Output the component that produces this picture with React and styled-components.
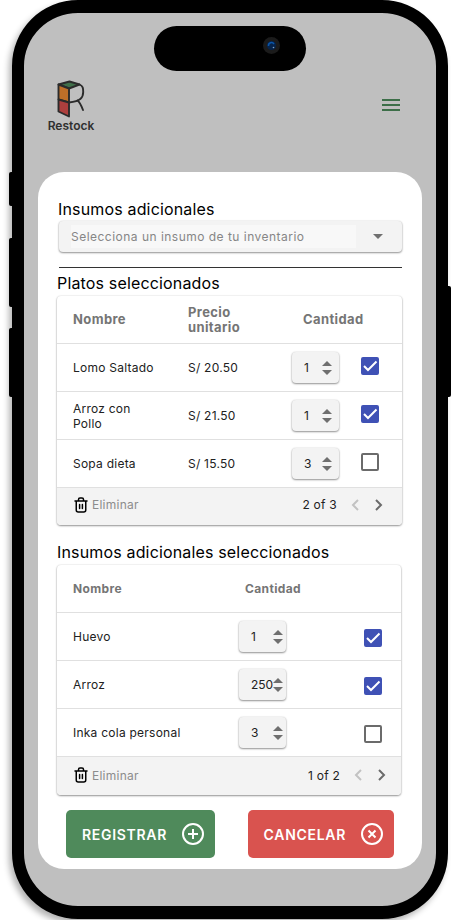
import React, { useState } from "react";
import styled, { createGlobalStyle } from "styled-components";

const GlobalStyle = createGlobalStyle`
  *, *::before, *::after { box-sizing: border-box; }
  body { margin: 0; background: #fff; }
  body, button, input, select { font-family: Inter, "Liberation Sans", sans-serif; }
  button { border: 0; padding: 0; background: none; color: inherit; cursor: pointer; }
`;

const Stage = styled.main`
  padding: 0 3px 1px 12px;
  overflow: hidden;
`;

const Phone = styled.div`
  position: relative;
  border: 12px solid #000;
  border-top-width: 13px;
  border-bottom-width: 13px;
  border-radius: 66px;
  background: #bfbfbf;
  box-shadow: -3px 4px 6px rgba(0, 0, 0, 0.3);
`;

const SideKey = styled.span`
  position: absolute;
  ${(p) => (p.$side === "right" ? "right: -15px;" : "left: -15px;")}
  top: ${(p) => p.$top}px;
  width: 6px;
  height: ${(p) => p.$height}px;
  background: #000;
  border-radius: 2px;
`;

const Island = styled.div`
  position: absolute;
  top: 13px;
  left: 50%;
  width: 152px;
  height: 45px;
  margin-left: -76px;
  padding-right: 26px;
  border-radius: 23px;
  background: #000;
  display: flex;
  align-items: center;
  justify-content: flex-end;
`;

const Camera = styled.svg`
  width: 17px;
  height: 17px;
  margin-bottom: 6px;
`;

const Screen = styled.div`
  padding: 0 14px 37px;
`;

const TopBar = styled.header`
  height: 159px;
  padding: 67px 22px 0 7px;
  display: flex;
  justify-content: space-between;
  align-items: flex-start;
`;

const Brand = styled.div`
  display: flex;
  flex-direction: column;
  align-items: center;
  width: 52px;
  color: #303030;
  font-size: 12px;
  font-weight: 600;
  line-height: 16px;
`;

const MenuButton = styled.button`
  display: grid;
  margin-top: 19px;
`;

const Sheet = styled.form`
  padding: 25px 20px 11px 19px;
  border-radius: 26px;
  background: #fff;
`;

const Title = styled.h2`
  margin: 0;
  color: #000;
  font-size: 16px;
  font-weight: 400;
  line-height: 24px;
  letter-spacing: 0.01em;
`;

const FieldLabel = styled(Title).attrs({ as: "label" })`
  display: block;
  padding-left: 1px;
`;

const raised = "0 1px 2px rgba(0, 0, 0, 0.4), 0 0 2px rgba(0, 0, 0, 0.14)";

const SelectBox = styled.div`
  display: grid;
  align-items: center;
  margin-left: 2px;
  height: 31px;
  border-radius: 4px;
  background: #f3f3f3;
  box-shadow: ${raised};

  > * { grid-area: 1 / 1; }
  > svg { justify-self: end; margin-right: 19px; pointer-events: none; }
`;

const Select = styled.select`
  appearance: none;
  width: 100%;
  height: 31px;
  padding: 4px 46px 4px 12px;
  border: 0;
  background: #f8f8f8 content-box;
  color: #868686;
  font-size: 12px;
  letter-spacing: 0.04em;
`;

const Divider = styled.hr`
  height: 1px;
  margin: 15px 0 3px 2px;
  border: 0;
  background: #333;
`;

const Panel = styled.section`
  margin: ${(p) => (p.$narrow ? "1px 1px 15px 0" : "1px 0 15px")};
  border-radius: 4px;
  overflow: hidden;
  background: #fff;
  box-shadow: ${raised};
`;

const Table = styled.table`
  width: 100%;
  table-layout: fixed;
  border-collapse: separate;
  border-spacing: 0;
  font-size: 12px;
  line-height: 15px;
  letter-spacing: 0.02em;
  color: #212121;
`;

const Th = styled.th`
  height: 48px;
  padding: 0 0 0 16px;
  border-bottom: 1px solid #e0e0e0;
  color: #757575;
  font-size: ${(p) => (p.$large ? 13 : 12)}px;
  font-weight: 700;
  letter-spacing: 0.03em;
  text-align: left;
`;

const Td = styled.td`
  height: 48px;
  padding: 0 0 0 ${(p) => p.$left ?? 16}px;
  border-bottom: 1px solid #e0e0e0;
`;

const CheckTd = styled(Td)`
  padding: ${(p) => (p.$low ? "3px 19px 0 0" : "0 0 3px 16px")};
  text-align: ${(p) => (p.$low ? "right" : "left")};
`;

const Name = styled.span`
  display: block;
  max-width: ${(p) => (p.$narrow ? "84px" : "none")};
`;

const StepperBox = styled.div`
  display: inline-flex;
  align-items: center;
  vertical-align: middle;
  width: 47px;
  height: 31px;
  padding-right: ${(p) => p.$inset}px;
  border-radius: 4px;
  background: #f3f3f3;
  box-shadow: ${raised};
`;

const NumberInput = styled.input`
  appearance: textfield;
  flex: 1;
  min-width: 0;
  height: 31px;
  padding: 0 0 0 12px;
  border: 0;
  background: none;
  color: #212121;
  font-size: 12px;
  &::-webkit-inner-spin-button { appearance: none; margin: 0; }
`;

const Arrows = styled.div`
  display: grid;
  gap: 4px;
  button { display: grid; }
`;

const CheckBox = styled.span`
  display: inline-grid;
  vertical-align: middle;
  > * { grid-area: 1 / 1; }
  > svg { pointer-events: none; }
`;

const CheckInput = styled.input`
  appearance: none;
  width: 18px;
  height: 18px;
  margin: 0;
  border: 2px solid #6b6b6b;
  border-radius: 2px;
  &:checked { border-color: #3f51b5; background: #3f51b5; }
`;

const Footer = styled.footer`
  display: flex;
  align-items: center;
  justify-content: space-between;
  height: ${(p) => (p.$compact ? 37 : 38)}px;
  padding: ${(p) => (p.$compact ? "0 17px 4px" : "0 13px 2px 17px")};
  background: #f3f3f3;
  font-size: 12px;
  letter-spacing: 0.02em;
`;

const DeleteButton = styled.button`
  display: flex;
  align-items: center;
  gap: 4px;
  color: #8c8c8c;
  letter-spacing: inherit;
  font-size: 12px;
  svg { color: #000; }
`;

const Pager = styled.nav`
  display: flex;
  align-items: center;
  gap: 12px;
  color: #212121;
`;

const PageButton = styled.button`
  display: grid;
  width: 12px;
  place-items: center;
  color: ${(p) => (p.disabled ? "#c2c2c2" : "#6b6b6b")};
`;

const Actions = styled.div`
  display: flex;
  justify-content: space-between;
  padding: 0 8px 0 9px;
`;

const ActionButton = styled.button`
  display: flex;
  align-items: center;
  gap: 14px;
  height: 48px;
  padding: 0 10px 0 16px;
  border-radius: 5px;
  background: ${(p) => (p.$danger ? "#d9534f" : "#4f8a5b")};
  color: #fff;
  font-size: 14px;
  font-weight: 600;
  letter-spacing: 0.05em;
`;

const Logo = () => (
  <svg width="28" height="38" viewBox="0 0 28 38" fill="none" stroke="#2b2b2b" strokeWidth="1.9" strokeLinejoin="round" strokeLinecap="round" aria-hidden="true">
    <path d="M1.5 4.5 L12.5 1.5 L22.5 4.5 L12 8.5 Z" fill="#3f6f49" />
    <path d="M1.5 4.5 L12 8.5 V22.5 L1.5 19.5 Z" fill="#bf6f28" />
    <path d="M1.5 19.5 L12 22.5 V36.5 L1.5 31.5 Z" fill="#ad3f3d" />
    <path d="M22.5 4.5 C26 6 26.2 8 26.2 12 C26.2 17.5 24 21 12 22.5" />
    <path d="M20.5 20.5 C23 22.5 24.5 26 26 30" />
  </svg>
);

const Triangle = ({ up }) => (
  <svg width="10" height="5" viewBox="0 0 10 5" fill="#6f6f6f" aria-hidden="true">
    <path d={up ? "M0 5 L5 0 L10 5 Z" : "M0 0 L5 5 L10 0 Z"} />
  </svg>
);

const TrashIcon = () => (
  <svg width="14" height="16" viewBox="0 0 14 16" fill="none" stroke="currentColor" strokeWidth="1.5" strokeLinecap="round" strokeLinejoin="round" aria-hidden="true">
    <path d="M1 4 H13 M4.5 4 V2.5 C4.5 1.5 5 1 6 1 H8 C9 1 9.5 1.5 9.5 2.5 V4 M2.25 4 V13 C2.25 14.2 3 15 4.2 15 H9.8 C11 15 11.75 14.2 11.75 13 V4 M5.6 7.5 V11.5 M8.4 7.5 V11.5" />
  </svg>
);

const Chevron = ({ left }) => (
  <svg width="8" height="12" viewBox="0 0 8 12" fill="none" stroke="currentColor" strokeWidth="2" aria-hidden="true">
    <path d={left ? "M7 1 L2 6 L7 11" : "M1 1 L6 6 L1 11"} />
  </svg>
);

const ActionIcon = ({ cross }) => (
  <svg width="24" height="24" viewBox="0 0 24 24" fill="none" stroke="#fff" strokeWidth="2" aria-hidden="true">
    <circle cx="12" cy="12" r="10" />
    <path d={cross ? "M8.5 8.5 L15.5 15.5 M15.5 8.5 L8.5 15.5" : "M12 7 V17 M7 12 H17"} />
  </svg>
);

function Stepper({ label, initial, inset }) {
  const [value, setValue] = useState(initial);
  return (
    <StepperBox $inset={inset}>
      <NumberInput type="number" aria-label={label} value={value} onChange={(e) => setValue(Number(e.target.value))} />
      <Arrows>
        <button type="button" aria-label="Aumentar" onClick={() => setValue(value + 1)}><Triangle up /></button>
        <button type="button" aria-label="Disminuir" onClick={() => setValue(Math.max(0, value - 1))}><Triangle /></button>
      </Arrows>
    </StepperBox>
  );
}

function Check({ label, initial }) {
  return (
    <CheckBox>
      <CheckInput type="checkbox" aria-label={label} defaultChecked={initial} />
      <svg width="18" height="18" viewBox="0 0 18 18" fill="none" stroke="#fff" strokeWidth="2" aria-hidden="true">
        <path d="M3 9 L7 13 L15.5 4.5" />
      </svg>
    </CheckBox>
  );
}

function PanelFooter({ pages, compact }) {
  return (
    <Footer $compact={compact}>
      <DeleteButton type="button"><TrashIcon />Eliminar</DeleteButton>
      <Pager aria-label="Páginas">
        <span>{pages}</span>
        <PageButton type="button" aria-label="Anterior" disabled><Chevron left /></PageButton>
        <PageButton type="button" aria-label="Siguiente"><Chevron /></PageButton>
      </Pager>
    </Footer>
  );
}

const dishes = [
  { name: "Lomo Saltado", price: "S/ 20.50", amount: 1, selected: true },
  { name: "Arroz con Pollo", price: "S/ 21.50", amount: 1, selected: true },
  { name: "Sopa dieta", price: "S/ 15.50", amount: 3, selected: false },
];

const supplies = [
  { name: "Huevo", amount: 1, selected: true },
  { name: "Arroz", amount: 250, selected: true },
  { name: "Inka cola personal", amount: 3, selected: false },
];

export default function App() {
  return (
    <Stage>
      <GlobalStyle />
      <Phone>
        <SideKey $top={159} $height={34} />
        <SideKey $top={225} $height={69} />
        <SideKey $top={315} $height={69} />
        <SideKey $side="right" $top={273} $height={111} />
        <Island>
          <Camera viewBox="0 0 17 17" aria-hidden="true">
            <circle cx="8.5" cy="8.5" r="8.5" fill="#1b1b1b" />
            <circle cx="8.5" cy="8.5" r="4.5" fill="#06234a" />
            <path d="M5.5 9 A3 3 0 0 1 11 7" fill="none" stroke="#0c56a8" strokeWidth="1.5" />
            <circle cx="10.5" cy="10.5" r="0.8" fill="#7fa4c8" />
          </Camera>
        </Island>
        <Screen>
          <TopBar>
            <Brand><Logo />Restock</Brand>
            <MenuButton type="button" aria-label="Menú">
              <svg width="18" height="12" viewBox="0 0 18 12" fill="#3c6e48" aria-hidden="true">
                <path d="M0 0 H18 V2 H0 Z M0 5 H18 V7 H0 Z M0 10 H18 V12 H0 Z" />
              </svg>
            </MenuButton>
          </TopBar>
          <Sheet onSubmit={(e) => e.preventDefault()}>
            <FieldLabel htmlFor="insumo">Insumos adicionales</FieldLabel>
            <SelectBox>
              <Select id="insumo" defaultValue="">
                <option value="">Selecciona un insumo de tu inventario</option>
              </Select>
              <Triangle />
            </SelectBox>
            <Divider />
            <Title>Platos seleccionados</Title>
            <Panel>
              <Table>
                <colgroup><col /><col /><col width="58" /><col width="57" /></colgroup>
                <thead>
                  <tr><Th $large>Nombre</Th><Th $large>Precio<br />unitario</Th><Th $large colSpan={2}>Cantidad</Th></tr>
                </thead>
                <tbody>
                  {dishes.map((d) => (
                    <tr key={d.name}>
                      <Td><Name $narrow>{d.name}</Name></Td>
                      <Td>{d.price}</Td>
                      <Td $left={5}><Stepper label={`Cantidad de ${d.name}`} initial={d.amount} inset={7} /></Td>
                      <CheckTd><Check label={`Seleccionar ${d.name}`} initial={d.selected} /></CheckTd>
                    </tr>
                  ))}
                </tbody>
              </Table>
              <PanelFooter pages="2 of 3" compact />
            </Panel>
            <Title>Insumos adicionales seleccionados</Title>
            <Panel $narrow>
              <Table>
                <colgroup><col width="50%" /><col /><col width="57" /></colgroup>
                <thead>
                  <tr><Th>Nombre</Th><Th colSpan={2}>Cantidad</Th></tr>
                </thead>
                <tbody>
                  {supplies.map((s) => (
                    <tr key={s.name}>
                      <Td><Name>{s.name}</Name></Td>
                      <Td $left={10}><Stepper label={`Cantidad de ${s.name}`} initial={s.amount} inset={3} /></Td>
                      <CheckTd $low><Check label={`Seleccionar ${s.name}`} initial={s.selected} /></CheckTd>
                    </tr>
                  ))}
                </tbody>
              </Table>
              <PanelFooter pages="1 of 2" />
            </Panel>
            <Actions>
              <ActionButton type="submit">REGISTRAR<ActionIcon /></ActionButton>
              <ActionButton type="button" $danger>CANCELAR<ActionIcon cross /></ActionButton>
            </Actions>
          </Sheet>
        </Screen>
      </Phone>
    </Stage>
  );
}
